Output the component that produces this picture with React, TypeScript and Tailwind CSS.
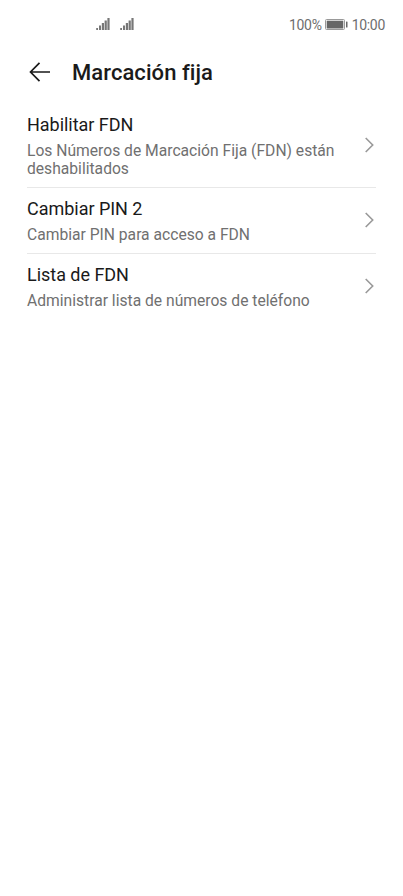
interface Item { title: string; summary: string }

const items: Item[] = [
  { title: 'Habilitar FDN', summary: 'Los Números de Marcación Fija (FDN) están deshabilitados' },
  { title: 'Cambiar PIN 2', summary: 'Cambiar PIN para acceso a FDN' },
  { title: 'Lista de FDN',  summary: 'Administrar lista de números de teléfono' },
]

function Signal() {
  return (
    <svg width="14" height="14" viewBox="0 0 14 14" fill="#777777">
      <rect x="0.2" y="11" width="1.8" height="2" />
      <rect x="3" y="8.5" width="2" height="4.5" />
      <rect x="5.8" y="6" width="2.2" height="7" />
      <rect x="8.6" y="3.5" width="2.2" height="9.5" />
      <rect x="11.4" y="1" width="2.2" height="12" />
    </svg>
  )
}

function StatusBar() {
  return (
    <div className="flex h-12 items-center justify-between pl-24 pr-[18px] text-[14px] leading-5 text-[#6e6e6e]">
      <div className="flex gap-2.5">
        <Signal />
        <Signal />
      </div>
      <div className="flex items-center gap-[3px] pt-0.5">
        <span className="tracking-[-0.3px]">100%</span>
        <svg width="23" height="12" viewBox="0 0 23 12" fill="#666666">
          <rect x="0.5" y="0.5" width="19" height="10" rx="1" fill="none" stroke="#999999" />
          <rect x="1.7" y="1.7" width="16.6" height="7.8" />
          <rect x="21" y="2.5" width="1.5" height="6" rx="0.5" />
        </svg>
        <span className="pl-px tracking-[-0.3px]">10:00</span>
      </div>
    </div>
  )
}

export default function App() {
  return (
    <div className="min-h-[896px] w-[403px] bg-white font-['Roboto',sans-serif]">
      <StatusBar />
      <header className="flex h-12 items-center gap-[21px] pl-[29px]">
        <svg width="22" height="20" viewBox="0 0 22 20" fill="none" stroke="#1a1a1a" strokeWidth="1.7">
          <path d="M21 10H2M10.5 0.8L1.5 10L10.5 19.2" />
        </svg>
        <h1 className="text-[22px] font-medium tracking-[0.07px] text-[#1a1a1a]">Marcación fija</h1>
      </header>

      <ul className="pt-2 pl-[27px] pr-[27px]">
        {items.map(item => (
          <li key={item.title} className="flex items-center justify-between border-b border-[#e8e8e8] pt-2.5 pb-[9px] last:border-b-0">
            <div className="w-[320px]">
              <h2 className="text-[18px] leading-[21px] tracking-[-0.03px] text-[#1a1a1a]">{item.title}</h2>
              <p className="mt-[7px] text-[15.65px] leading-[18px] text-[#707070]">{item.summary}</p>
            </div>
            <svg className="mb-0.5" width="12" height="16" viewBox="0 0 12 16" fill="none" stroke="#999999" strokeWidth="1.6">
              <path d="M1.7 1L8.7 8L1.7 15" />
            </svg>
          </li>
        ))}
      </ul>
    </div>
  )
}
